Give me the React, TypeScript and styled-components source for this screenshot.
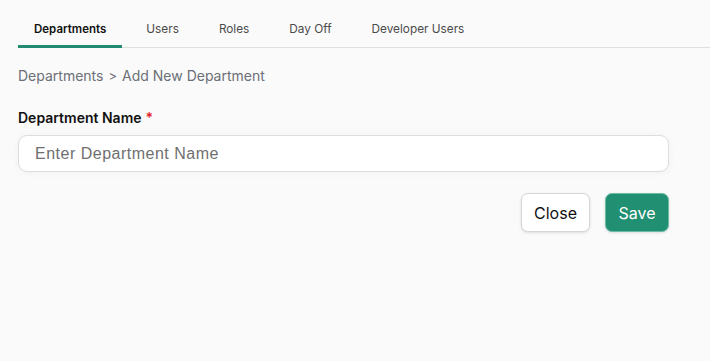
import React, { useState } from "react";
import styled, { createGlobalStyle } from "styled-components";

const GlobalStyle = createGlobalStyle`
  html, body {
    margin: 0;
    padding: 0;
    background: #fafafa;
  }
  body {
    font-family: Inter, "Noto Sans", sans-serif;
    color: #111;
  }
`;

const Page = styled.div`
  padding: 10px 41px 0 18px;
  min-height: 351px;
  background: #fafafa;
`;

const TabBar = styled.nav`
  display: flex;
  align-items: flex-end;
  gap: 8px;
  border-bottom: 1px solid #dedede;
  margin-right: -41px;
`;

const Tab = styled.button<{ $active?: boolean }>`
  font-family: Inter, sans-serif;
  font-size: ${(p) => (p.$active ? "11.5px" : "11.8px")};
  line-height: 15px;
  font-weight: ${(p) => (p.$active ? 600 : 400)};
  color: ${(p) => (p.$active ? "#111" : "#4b4b4b")};
  background: none;
  border: none;
  border-bottom: 3px solid ${(p) => (p.$active ? "#228a70" : "transparent")};
  margin-bottom: -1px;
  padding: 12px 16px 8px;
  cursor: pointer;
`;

const Crumbs = styled.div`
  display: flex;
  align-items: center;
  gap: 5px;
  margin-top: 18px;
  font-size: 14px;
  color: #6b6f76;
`;

const Sep = styled.span`
  font-size: 13px;
  margin-top: 2px;
`;

const Label = styled.label`
  display: block;
  margin-top: 25px;
  font-size: 14px;
  font-weight: 600;
  color: #111;
`;

const Star = styled.span`
  color: #e11d2a;
  margin-left: 4px;
`;

const Input = styled.input`
  display: block;
  box-sizing: border-box;
  width: 100%;
  height: 37px;
  margin-top: 9px;
  padding: 0 16px;
  border: 1px solid #dddddd;
  border-radius: 9px;
  background: #fff;
  box-shadow: 0 1px 8px rgba(0, 0, 0, 0.04);
  font-family: "Liberation Sans", Arial, sans-serif;
  font-size: 16px;
  letter-spacing: 0.5px;
  color: #111;
  outline: none;
  &::placeholder {
    color: #6f6f6f;
  }
`;

const Actions = styled.div`
  display: flex;
  justify-content: flex-end;
  gap: 15px;
  margin-top: 21px;
`;

const Button = styled.button<{ $primary?: boolean }>`
  height: 39px;
  padding: 0 ${(p) => (p.$primary ? "12.5px" : "12px")};
  border-radius: 7px;
  font-family: Inter, sans-serif;
  font-size: 16px;
  cursor: pointer;
  border: 1px solid ${(p) => (p.$primary ? "#6cbba4" : "#d6d6d6")};
  background: ${(p) => (p.$primary ? "#218f72" : "#fff")};
  color: ${(p) => (p.$primary ? "#fff" : "#111")};
  box-shadow: 0 1px 3px rgba(0, 0, 0, 0.12);
`;

const tabs = ["Departments", "Users", "Roles", "Day Off", "Developer Users"];

export default function App() {
  const [active, setActive] = useState("Departments");
  const [name, setName] = useState("");
  return (
    <>
      <GlobalStyle />
      <Page>
        <TabBar>
          {tabs.map((t) => (
            <Tab key={t} $active={t === active} onClick={() => setActive(t)}>
              {t}
            </Tab>
          ))}
        </TabBar>
        <Crumbs>
          <span>Departments</span>
          <Sep>&gt;</Sep>
          <span>Add New Department</span>
        </Crumbs>
        <Label htmlFor="dept">
          Department Name<Star>*</Star>
        </Label>
        <Input
          id="dept"
          placeholder="Enter Department Name"
          value={name}
          onChange={(e) => setName(e.target.value)}
        />
        <Actions>
          <Button>Close</Button>
          <Button $primary>Save</Button>
        </Actions>
      </Page>
    </>
  );
}
